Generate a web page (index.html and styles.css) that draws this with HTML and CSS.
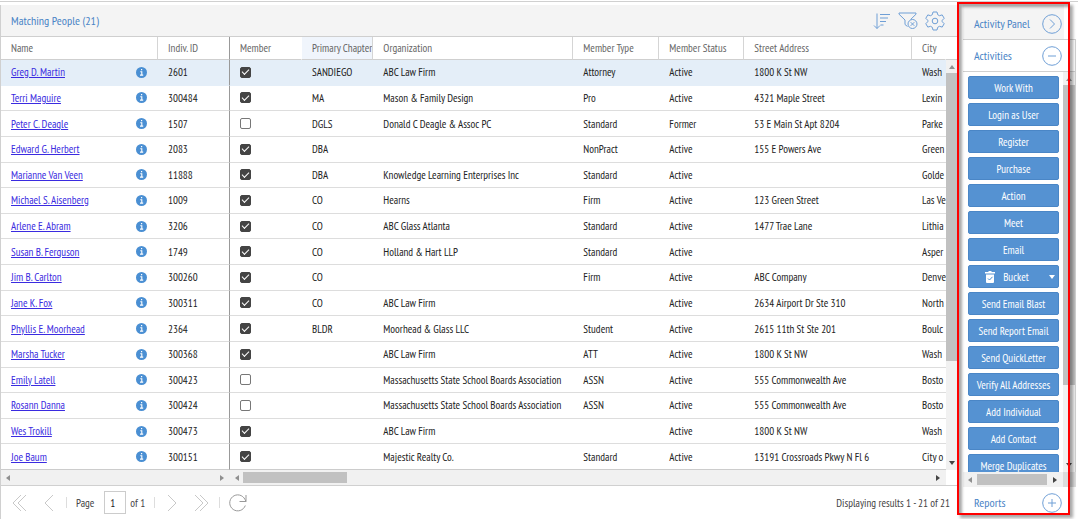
FILE: index.html
```html
<!DOCTYPE html>
<html lang="en">
<head>
<meta charset="utf-8">
<title>Matching People</title>
<link rel="stylesheet" href="styles.css">
</head>
<body>
<svg class="defs" aria-hidden="true">
  <symbol id="info" viewBox="0 0 11 11"><circle cx="5.5" cy="5.5" r="5.5" fill="#4a8fd3"/><path d="M4.3 4.7h1.5v3.2M4 8.1h3.2M5 2.6h1.2" stroke="#fff" stroke-width="1.1" fill="none"/></symbol>
  <symbol id="left" viewBox="0 0 4 6"><path d="M4 0v6L0 3z"/></symbol>
  <symbol id="right" viewBox="0 0 4 6"><path d="M0 0v6l4-3z"/></symbol>
  <symbol id="up" viewBox="0 0 6 4"><path d="M0 4h6L3 0z"/></symbol>
  <symbol id="down" viewBox="0 0 6 4"><path d="M0 0h6L3 4z"/></symbol>
</svg>
<div class="topline"></div>
<div class="app">
  <main class="people">
    <header class="toolbar">
      <h1>Matching People (21)</h1>
      <div class="tools">
        <button class="icon" aria-label="Sort"><svg width="18" height="18" viewBox="0 0 18 18"><path d="M4 1.5v15M1 13.5l3 3 3-3M7 2.5h10M7 6h8M7 9.5h6M7.5 13h3"/></svg></button>
        <button class="icon" aria-label="Clear filter"><svg width="20" height="18" viewBox="0 0 20 18"><path d="M9.5 14.5l-2.5-2V8L1 2.2V1h17v1.2L12.6 7.5"/><circle cx="14.5" cy="12" r="4.5"/><path d="M12.7 10.2l3.6 3.6M16.3 10.2l-3.6 3.6"/></svg></button>
        <button class="icon" aria-label="Settings"><svg width="20" height="20" viewBox="0 0 20 20"><path d="M8 1h4l.7 2.7 1.8 1 2.7-.8 2 3.4-2 2v1.4l2 2-2 3.4-2.7-.8-1.8 1L12 19H8l-.7-2.7-1.800-1-2.700.8-2-3.400 2-2V9.300l-2-2 2-3.400 2.700.8 1.800-1z" stroke-linejoin="round"/><circle cx="10" cy="10" r="2.8"/></svg></button>
      </div>
    </header>
    <div class="tablewrap">
      <table>
        <colgroup><col class="c-name"><col class="c-id"><col class="c-member"><col class="c-chapter"><col class="c-org"><col class="c-type"><col class="c-status"><col><col class="c-city"></colgroup>
        <thead><tr><th>Name</th><th class="frozen">Indiv. ID</th><th class="plain">Member</th><th class="sorted">Primary Chapter</th><th>Organization</th><th>Member Type</th><th>Member Status</th><th>Street Address</th><th class="plain">City</th></tr></thead>
        <tbody>
          <tr class="selected"><td><div class="name"><a href="#">Greg D. Martin</a><svg><use href="#info"/></svg></div></td><td class="frozen">2601</td><td><input type="checkbox" aria-label="Member" checked></td><td>SANDIEGO</td><td>ABC Law Firm</td><td>Attorney</td><td>Active</td><td>1800 K St NW</td><td>Wash</td></tr>
          <tr><td><div class="name"><a href="#">Terri Maguire</a><svg><use href="#info"/></svg></div></td><td class="frozen">300484</td><td><input type="checkbox" aria-label="Member" checked></td><td>MA</td><td>Mason &amp; Family Design</td><td>Pro</td><td>Active</td><td>4321 Maple Street</td><td>Lexin</td></tr>
          <tr><td><div class="name"><a href="#">Peter C. Deagle</a><svg><use href="#info"/></svg></div></td><td class="frozen">1507</td><td><input type="checkbox" aria-label="Member"></td><td>DGLS</td><td>Donald C Deagle &amp; Assoc PC</td><td>Standard</td><td>Former</td><td>53 E Main St Apt 8204</td><td>Parke</td></tr>
          <tr><td><div class="name"><a href="#">Edward G. Herbert</a><svg><use href="#info"/></svg></div></td><td class="frozen">2083</td><td><input type="checkbox" aria-label="Member" checked></td><td>DBA</td><td></td><td>NonPract</td><td>Active</td><td>155 E Powers Ave</td><td>Green</td></tr>
          <tr><td><div class="name"><a href="#">Marianne Van Veen</a><svg><use href="#info"/></svg></div></td><td class="frozen">11888</td><td><input type="checkbox" aria-label="Member" checked></td><td>DBA</td><td>Knowledge Learning Enterprises Inc</td><td>Standard</td><td>Active</td><td></td><td>Golde</td></tr>
          <tr><td><div class="name"><a href="#">Michael S. Aisenberg</a><svg><use href="#info"/></svg></div></td><td class="frozen">1009</td><td><input type="checkbox" aria-label="Member" checked></td><td>CO</td><td>Hearns</td><td>Firm</td><td>Active</td><td>123 Green Street</td><td>Las Ve</td></tr>
          <tr><td><div class="name"><a href="#">Arlene E. Abram</a><svg><use href="#info"/></svg></div></td><td class="frozen">3206</td><td><input type="checkbox" aria-label="Member" checked></td><td>CO</td><td>ABC Glass Atlanta</td><td>Standard</td><td>Active</td><td>1477 Trae Lane</td><td>Lithia</td></tr>
          <tr><td><div class="name"><a href="#">Susan B. Ferguson</a><svg><use href="#info"/></svg></div></td><td class="frozen">1749</td><td><input type="checkbox" aria-label="Member" checked></td><td>CO</td><td>Holland &amp; Hart LLP</td><td>Standard</td><td>Active</td><td></td><td>Asper</td></tr>
          <tr><td><div class="name"><a href="#">Jim B. Carlton</a><svg><use href="#info"/></svg></div></td><td class="frozen">300260</td><td><input type="checkbox" aria-label="Member" checked></td><td>CO</td><td></td><td>Firm</td><td>Active</td><td>ABC Company</td><td>Denve</td></tr>
          <tr><td><div class="name"><a href="#">Jane K. Fox</a><svg><use href="#info"/></svg></div></td><td class="frozen">300311</td><td><input type="checkbox" aria-label="Member" checked></td><td>CO</td><td>ABC Law Firm</td><td></td><td>Active</td><td>2634 Airport Dr Ste 310</td><td>North</td></tr>
          <tr><td><div class="name"><a href="#">Phyllis E. Moorhead</a><svg><use href="#info"/></svg></div></td><td class="frozen">2364</td><td><input type="checkbox" aria-label="Member" checked></td><td>BLDR</td><td>Moorhead &amp; Glass LLC</td><td>Student</td><td>Active</td><td>2615 11th St Ste 201</td><td>Boulc</td></tr>
          <tr><td><div class="name"><a href="#">Marsha Tucker</a><svg><use href="#info"/></svg></div></td><td class="frozen">300368</td><td><input type="checkbox" aria-label="Member" checked></td><td></td><td>ABC Law Firm</td><td>ATT</td><td>Active</td><td>1800 K St NW</td><td>Wash</td></tr>
          <tr><td><div class="name"><a href="#">Emily Latell</a><svg><use href="#info"/></svg></div></td><td class="frozen">300423</td><td><input type="checkbox" aria-label="Member"></td><td></td><td>Massachusetts State School Boards Association</td><td>ASSN</td><td>Active</td><td>555 Commonwealth Ave</td><td>Bosto</td></tr>
          <tr><td><div class="name"><a href="#">Rosann Danna</a><svg><use href="#info"/></svg></div></td><td class="frozen">300424</td><td><input type="checkbox" aria-label="Member"></td><td></td><td>Massachusetts State School Boards Association</td><td>ASSN</td><td>Active</td><td>555 Commonwealth Ave</td><td>Bosto</td></tr>
          <tr><td><div class="name"><a href="#">Wes Trokill</a><svg><use href="#info"/></svg></div></td><td class="frozen">300473</td><td><input type="checkbox" aria-label="Member" checked></td><td></td><td>ABC Law Firm</td><td></td><td>Active</td><td>1800 K St NW</td><td>Wash</td></tr>
          <tr><td><div class="name"><a href="#">Joe Baum</a><svg><use href="#info"/></svg></div></td><td class="frozen">300151</td><td><input type="checkbox" aria-label="Member" checked></td><td></td><td>Majestic Realty Co.</td><td>Standard</td><td>Active</td><td>13191 Crossroads Pkwy N Fl 6</td><td>City o</td></tr>
        </tbody>
      </table>
      <div class="vside">
        <div class="vhead"></div>
        <div class="vscroll"><svg class="va dim"><use href="#up"/></svg><div class="vthumb"></div><svg class="va"><use href="#down"/></svg></div>
      </div>
    </div>
    <div class="hrow">
      <div class="hscroll hfrozen"><svg class="ha mid"><use href="#left"/></svg><svg class="ha mid"><use href="#right"/></svg></div>
      <div class="hscroll hmain"><svg class="ha mid"><use href="#left"/></svg><div class="hthumb"></div><svg class="ha"><use href="#right"/></svg></div>
    </div>
    <footer class="paging">
      <button class="pg" aria-label="First page"><svg width="16" height="18" viewBox="0 0 16 18"><path d="M10 1L2 9l8 8M15 1L7 9l8 8"/></svg></button>
      <button class="pg" aria-label="Previous page"><svg width="16" height="18" viewBox="0 0 16 18"><path d="M12 1L4 9l8 8"/></svg></button>
      <span class="bar"></span>
      <label for="page">Page</label>
      <input id="page" type="text" value="1">
      <span class="of">of 1</span>
      <span class="bar"></span>
      <button class="pg" aria-label="Next page"><svg width="16" height="18" viewBox="0 0 16 18"><path d="M4 1l8 8-8 8"/></svg></button>
      <button class="pg" aria-label="Last page"><svg width="16" height="18" viewBox="0 0 16 18"><path d="M1 1l8 8-8 8M6 1l8 8-8 8"/></svg></button>
      <span class="bar"></span>
      <button class="pg refresh" aria-label="Refresh"><svg width="18" height="18" viewBox="0 0 18 18"><path d="M16.3 11.5A8 8 0 1 1 16 5.5l1 2M17 1v6.5h-6.5"/></svg></button>
      <span class="results">Displaying results 1 - 21 of 21</span>
    </footer>
  </main>
  <aside class="side">
    <section class="phead first"><h2>Activity Panel</h2><button class="icon" aria-label="Collapse panel"><svg width="20" height="20" viewBox="0 0 20 20"><circle cx="10" cy="10" r="9.3"/><path d="M8 5.5l4.5 4.5L8 14.5"/></svg></button></section>
    <section class="phead second"><h2>Activities</h2><button class="icon" aria-label="Collapse activities"><svg width="20" height="20" viewBox="0 0 20 20"><circle cx="10" cy="10" r="9.3"/><path d="M6 10h8"/></svg></button></section>
    <div class="acts">
      <div class="list">
        <button>Work With</button><button>Login as User</button><button>Register</button><button>Purchase</button><button>Action</button><button>Meet</button><button>Email</button>
        <button class="bucket"><svg width="10" height="12" viewBox="0 0 10 12"><path d="M0 1h3l1-1h2l1 1h3v1.500H0zM1 3.500h8V11q0 1-1 1H2q-1 0-1-1z" fill="#fff"/><path d="M3 7.500l1.500 1.500L7.500 5.800" stroke="#4a8fd3" fill="none"/></svg><span>Bucket</span><svg class="caret" width="6" height="4"><use href="#down"/></svg></button>
        <button>Send Email Blast</button><button>Send Report Email</button><button>Send QuickLetter</button><button>Verify All Addresses</button><button>Add Individual</button><button>Add Contact</button><button>Merge Duplicates</button>
      </div>
      <div class="vscroll sidev"><svg class="va mid"><use href="#up"/></svg><div class="vthumb"></div><svg class="va"><use href="#down"/></svg></div>
    </div>
    <div class="shrow"><div class="hscroll"><svg class="ha mid"><use href="#left"/></svg><div class="hthumb"></div><svg class="ha"><use href="#right"/></svg></div></div>
    <section class="phead last"><h2>Reports</h2><button class="icon" aria-label="Expand reports"><svg width="20" height="20" viewBox="0 0 20 20"><circle cx="10" cy="10" r="9.3"/><path d="M6 10h8M10 6v8"/></svg></button></section>
  </aside>
</div>
<div class="callout"></div>
</body>
</html>
```
FILE: styles.css
```css
*{box-sizing:border-box}
html,body{height:100%}
body{margin:0;display:flex;flex-direction:column;background:#fff;color:#222;font-family:"PT Sans Narrow","Liberation Sans",sans-serif;font-size:11px;line-height:16px;overflow:hidden}
button{font:inherit;border:0;padding:0;background:none;color:inherit;display:flex}
h1,h2{margin:0;font-weight:400;font-size:12px;color:#4a84c6}
svg{display:block;flex:none}
.defs{width:0;height:0;position:absolute}
.topline{height:2px;margin-bottom:3px;border-bottom:1px solid #d0d0d0}
.app{flex:1;min-height:0;display:flex}
.people{flex:1;min-width:0;display:flex;flex-direction:column;border-left:1px solid #d0d0d0}
.toolbar{height:32px;background:#f4f4f4;border-bottom:1px solid #cfcfcf;display:flex;align-items:center;justify-content:space-between;padding:0 13px 0 10px}
.tools{display:flex;align-items:center;gap:7px}
.icon svg{fill:none;stroke:#6f9fd6;stroke-width:1}
.tablewrap{flex:1;min-height:0;display:flex}
table{flex:1;min-width:0;height:100%;table-layout:fixed;border-collapse:separate;border-spacing:0}
.c-name{width:157px}.c-id{width:72px}.c-member{width:72px}.c-chapter{width:71px}.c-org{width:200px}.c-type{width:86px}.c-status{width:85px}.c-city{width:31px}
th,td{padding:0 0 0 10px;text-align:left;font-weight:400;white-space:nowrap;overflow:hidden;border-bottom:1px solid #ddd}
th{height:23px;color:#666;border-right:1px solid #d5d5d5;border-bottom-color:#cfcfcf}
th.plain{border-right-color:transparent}
th.sorted{background:#f0f5fc}
th.frozen,td.frozen{border-right:1px solid #999}
tr:last-child td{border-bottom-color:#ccc}
.selected td{background:#e4eef8;border-bottom-color:#e4eef8}
.name{display:flex;align-items:center;justify-content:space-between;padding-right:11px}
.name svg{width:11px;height:11px}
a{color:#3a2be0}
input[type=checkbox]{appearance:none;display:flex;align-items:center;justify-content:center;width:11px;height:11px;margin:0;border:1px solid #777;border-radius:2px;background:#fff}
input[type=checkbox]:checked{background:#444;border-color:#444}
input[type=checkbox]:checked::before{content:"";width:6px;height:3px;border:solid #fff;border-width:0 0 1px 1px;rotate:-45deg;margin-bottom:2px}
.vside{flex:none;width:12px;display:flex;flex-direction:column}
.vhead{height:23px;border-bottom:1px solid #cfcfcf}
.vscroll{flex:1;display:flex;flex-direction:column;align-items:center;justify-content:space-between;background:#f1f1f1;padding:5px 0}
.va{width:6px;height:4px;fill:#444}
.ha{width:4px;height:6px;fill:#444}
.dim,.mid{fill:#909090}
.vthumb{width:100%;flex:none;height:72%;margin:4px 0 auto;background:#c1c1c1}
.hrow{height:16px;display:flex;border-bottom:1px solid #d0d0d0;padding-right:12px}
.hscroll{flex:1;min-width:0;display:flex;align-items:center;background:#f1f1f1;padding:0 6px 0 5px;justify-content:space-between}
.hfrozen{flex:none;width:229px}
.hthumb{height:11px;width:104px;margin:0 auto 0 4px;background:#c1c1c1}
.paging{height:33px;display:flex;align-items:center;padding:0 8px 0 10px;color:#444}
.pg svg{fill:none;stroke:#c8c8c8;stroke-width:1}
.pg+.pg{margin-left:14px}
.refresh svg{stroke:#999}
.bar{width:1px;height:11px;background:#ddd}
.pg+.bar{margin:0 9px}
label{margin-right:10px}
#page{width:22px;height:23px;border:1px solid #ccc;padding:0 0 0 5px;font:inherit;color:#222}
.of{margin:0 9px 0 4px}
.bar+.pg{margin-left:9px}
.bar+.refresh{margin-left:0}
.results{margin-left:auto}
.side{flex:none;width:120px;padding:0 2px 0 5px;display:flex;flex-direction:column}
.phead{display:flex;align-items:center;justify-content:space-between;padding:0 14px 0 11px}
.first{height:34px;background:linear-gradient(to right,#f4f4f4 101px,#fff 101px);padding-top:4px}
.second{height:33px;border:solid #d0d0d0;border-width:1px 1px 1px 0;padding-right:13px}
.acts{flex:1;min-height:0;display:flex;border-right:1px solid #d0d0d0}
.list{flex:1;overflow:hidden;display:flex;flex-direction:column;gap:4px;padding:4px 4px 0 5px}
.list button{flex:none;height:23px;align-items:center;justify-content:center;background:#5592d2;border:1px solid #4a86c6;border-radius:2px;color:#fff}
.list .bucket{justify-content:space-between;padding:0 3px 0 16px}
.bucket span{margin-right:12px}
.caret{fill:#fff}
.sidev{flex:none;width:12px}
.sidev .vthumb{height:300px}
.shrow{height:15px;background:#dcdcdc;padding-right:13px;display:flex}
.shrow .hthumb{flex:1;width:auto;margin:0 6px 0 5px}
.last{height:32px}
.callout{position:absolute;top:2px;right:8px;bottom:4px;width:113px;border:2px solid #f00;box-shadow:3px 3px 3px rgba(0,0,0,.35),inset 3px 3px 3px rgba(0,0,0,.35);pointer-events:none}
```
